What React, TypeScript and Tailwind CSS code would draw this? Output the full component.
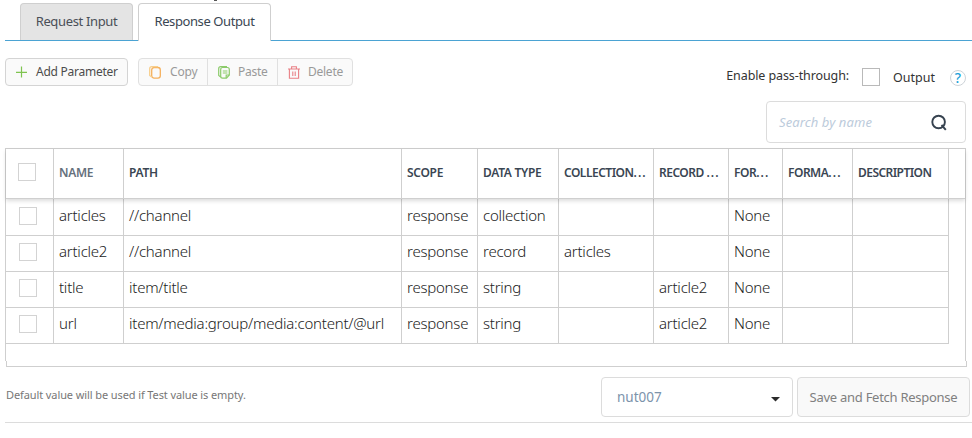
import React from "react";

const COLS = "grid grid-cols-[48px_70px_278px_76px_81px_95px_75px_54px_70px_96px_1fr]";

const HEADERS = ["NAME", "PATH", "SCOPE", "DATA TYPE", "COLLECTION", "RECORD ", "FOR", "FORMA", "DESCRIPTION"];
const TRUNCATED = ["COLLECTION", "RECORD ", "FOR", "FORMA"];

const ROWS = [
  ["articles", "//channel", "response", "collection", "", "", "None", "", ""],
  ["article2", "//channel", "response", "record", "articles", "", "None", "", ""],
  ["title", "item/title", "response", "string", "", "article2", "None", "", ""],
  ["url", "item/media:group/media:content/@url", "response", "string", "", "article2", "None", "", ""],
];

function Box({ className = "" }: { className?: string }) {
  return <span className={`block h-[18px] w-[18px] shrink-0 border bg-white ${className}`} />;
}

function Tabs() {
  return (
    <div className="relative ml-[5px] flex h-[41px] items-end border-b border-[#4ba3d3] pl-[15px] pt-[3px]">
      <span className="absolute top-0 left-[209px] h-px w-[3px] bg-[#555]" />
      <div className="mr-[5px] flex h-[37px] w-[113px] items-center justify-center rounded-t border border-b-0 border-[#cfcfcf] bg-[#e4e4e4] text-[13px] tracking-[-0.35px] text-[#4a4f57]">
        <span>Request Input</span>
      </div>
      <div className="-mb-px flex h-[38px] w-[133px] items-center justify-center rounded-t border border-b-0 border-[#cfcfcf] bg-white pb-px text-[13px] tracking-[-0.4px] text-[#3a4652]">
        <span>Response Output</span>
      </div>
    </div>
  );
}

function Toolbar() {
  return (
    <div className="flex h-[28px] text-[12px] tracking-[-0.25px]">
      <div className="mr-[10px] flex w-[123px] items-center rounded border border-[#d4d4d4] bg-[#fafafa] pl-[10px] text-[#4c4c4c]">
        <svg width="12" height="12" viewBox="0 0 12 12" className="mr-[8px]" stroke="#7fc450" strokeWidth="1.2">
          <path d="M5.5 .5v11M0 6.4h11" />
        </svg>
        <span>Add Parameter</span>
      </div>
      <div className="flex w-[215px] rounded border border-[#e0e0e0] bg-[#fafafa] text-[#999]">
        <div className="flex w-[69px] items-center border-r border-[#e0e0e0] pl-[10px]">
          <svg width="12" height="13" viewBox="0 0 12 13" className="mr-[9px]" fill="none" stroke="#f5b05c" strokeWidth="1.3">
            <rect x="2.7" y="1.5" width="8.6" height="10.6" rx="2.4" />
            <path d="M9 .7H2.7Q.7.7.7 2.7V9.5L2.7 11" stroke="#f8cf8d" />
          </svg>
          <span className="tracking-[-0.15px]">Copy</span>
        </div>
        <div className="flex w-[70px] items-center border-r border-[#e0e0e0] pl-[10px]">
          <svg width="12" height="13" viewBox="0 0 12 13" className="mr-[8px]" fill="none" stroke="#8ccb6b" strokeWidth="1.2">
            <path d="M2.7 3.4Q2.7 1.5 4.6 1.5H9.4Q11.3 1.5 11.3 3.4V9L8.5 12.2H4.6Q2.7 12.2 2.7 10.3Z" />
            <path d="M8.2 12V9H11.2M4.8 5h4.6M4.8 7h4.6" />
            <path d="M9 .7H2.7Q.7.7.7 2.7V9.5L2.7 11" />
          </svg>
          <span>Paste</span>
        </div>
        <div className="flex items-center pl-[10px]">
          <svg width="12" height="13" viewBox="0 0 12 13" className="mr-[8px]" fill="none" stroke="#e98086" strokeWidth="1.1">
            <path d="M0 3H12M3.6 3V.8H8.4V3M1.4 3V12.2H10.6V3M4.8 5.5V10M7.2 5.5V10" />
          </svg>
          <span>Delete</span>
        </div>
      </div>
    </div>
  );
}

function PassThrough() {
  return (
    <div className="flex text-[12.5px] text-[#333]">
      <span className="mt-[9px] mr-[13px] leading-[18px] tracking-[-0.1px]">Enable pass-through:</span>
      <Box className="mt-[10px] mr-[13px] border-[#b9b9b9]" />
      <span className="mt-[11px] mr-[15px] leading-[18px]">Output</span>
      <span className="mt-[12px] flex h-[16px] w-[16px] items-center justify-center rounded-full border border-[#cdd3d8] text-[14px] leading-none font-medium text-[#1ba0d8]">?</span>
    </div>
  );
}

function Table() {
  return (
    <div className="mt-[5px] ml-[5px] h-[219px] w-[962px]">
      <div className="flex h-[213px] w-[961px] flex-col border border-b-0 border-[#cfcfcf]">
        <div className={`${COLS} relative h-[50px] shrink-0 border-b border-[#cfcfcf] shadow-[0_2px_4px_rgba(0,0,0,0.14)]`}>
          <div className="border-r border-[#cfcfcf] pl-[12px] pt-[14px]">
            <Box className="border-[#d3d3d3]" />
          </div>
          {HEADERS.map((h, i) => (
            <div key={h} className={`flex items-center overflow-hidden border-r border-[#cfcfcf] pl-[5px] pb-px text-[12px] font-semibold whitespace-pre ${i === 8 ? "tracking-[-0.55px]" : "tracking-[-0.3px]"} ${i === 0 ? "text-[#65707c]" : "text-[#3a4653]"}`}>
              <span className={TRUNCATED.includes(h) ? "tracking-[-0.5px]" : ""}>{h}</span>
              {TRUNCATED.includes(h) && <span className="tracking-[1.1px]">...</span>}
            </div>
          ))}
        </div>
        {ROWS.map((row, r) => (
          <div key={row[0]} className={`${COLS} shrink-0 ${r === 0 ? "h-[37px]" : "h-[36px]"}`}>
            <div className={`border-r border-b border-[#cfcfcf] pl-[13px] ${r === 0 ? "pt-[8px]" : "pt-[7px]"}`}>
              <Box className="border-[#d3d3d3]" />
            </div>
            {row.map((cell, i) => (
              <div key={i} className={`border-r border-b border-[#cfcfcf] pl-[5px] text-[15px] leading-[20px] font-light tracking-[-0.23px] whitespace-nowrap text-[#222] ${r === 0 ? "pt-[6px]" : "pt-[5px]"}`}>
                <span>{cell}</span>
              </div>
            ))}
          </div>
        ))}
      </div>
      <div className="ml-px h-[6px] w-[961px] border border-t-0 border-[#cfcfcf]" />
    </div>
  );
}

function Footer() {
  return (
    <div className="ml-[5px] flex h-[56px] border-b border-[#dcdcdc] pt-[10px]">
      <span className="ml-px mt-[9px] w-[595px] text-[11px] leading-[18px] tracking-[-0.1px] text-[#777]">Default value will be used if Test value is empty.</span>
      <div className="mr-[4px] flex h-[40px] w-[192px] items-center justify-between rounded border border-[#dcdcdc] pr-[12px] pl-[15px] text-[13.5px] text-[#7c93ab]">
        <span>nut007</span>
        <svg width="9" height="5" viewBox="0 0 9 5" className="mt-[4px]">
          <path d="M0 0H9L4.5 4.5Z" fill="#2b2b2b" />
        </svg>
      </div>
      <div className="flex h-[40px] w-[173px] items-center justify-center rounded border border-[#dcdcdc] bg-[#f9f9f9] pt-px text-[13px] tracking-[-0.27px] whitespace-nowrap text-[#808080]">
        <span>Save and Fetch Response</span>
      </div>
    </div>
  );
}

export default function App() {
  return (
    <div className="h-[438px] w-[972px] overflow-hidden bg-white font-['Noto_Sans',sans-serif]">
      <Tabs />
      <div className="flex h-[60px] justify-between pr-[6px] pl-[5px]">
        <div className="pt-[17px]">
          <Toolbar />
        </div>
        <div className="pt-[17px]">
          <PassThrough />
        </div>
      </div>
      <div className="ml-[766px] flex h-[42px] w-[200px] items-center justify-between rounded-sm border border-[#dcdcdc] pr-[17px] pl-[12px] text-[13px] text-[#bccbdb] italic">
        <span className="pt-px tracking-[0.1px]">Search by name</span>
        <svg width="17" height="17" viewBox="0 0 17 17" fill="none" stroke="#36424f" strokeWidth="1.9">
          <circle cx="7.6" cy="8" r="6.3" />
          <path d="M10.5 11L14.8 15.8" />
        </svg>
      </div>
      <Table />
      <Footer />
    </div>
  );
}
